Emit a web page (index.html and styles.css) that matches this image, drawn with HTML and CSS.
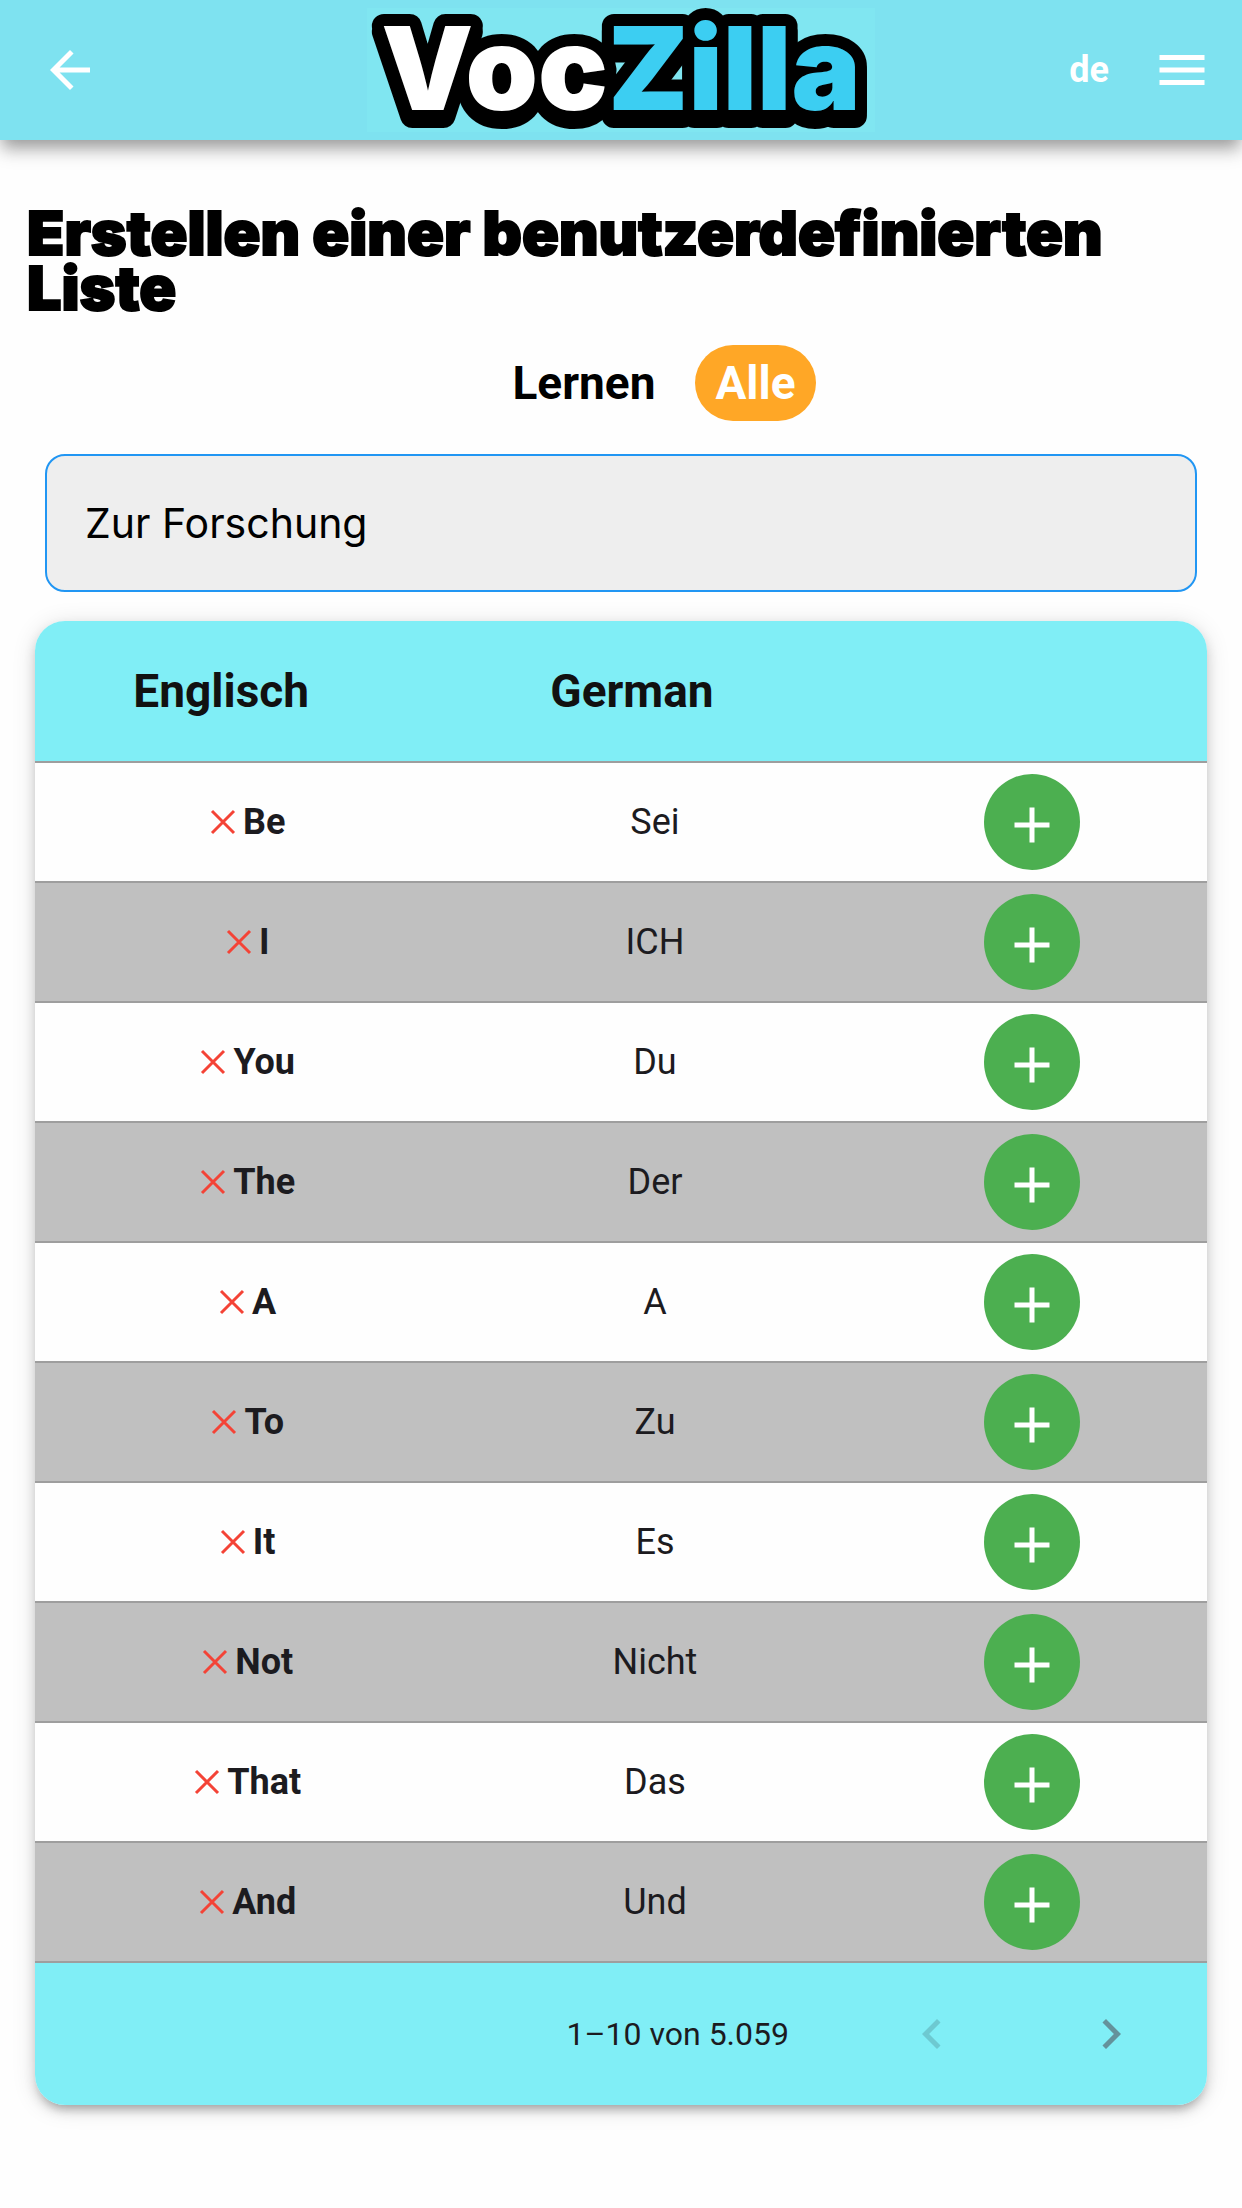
FILE: index.html
```html
<!DOCTYPE html>
<html lang="de">
<head>
<meta charset="utf-8">
<meta name="viewport" content="width=device-width, initial-scale=1">
<title>VocZilla</title>
<link rel="stylesheet" href="styles.css">
</head>
<body>
<svg class="sprite" aria-hidden="true">
  <symbol id="close" viewBox="0 0 24 24"><path d="M5.400 5.400 18.600 18.600M18.600 5.400 5.400 18.600" fill="none" stroke="currentColor" stroke-width="1.800"/></symbol>
  <symbol id="plus" viewBox="0 0 96 96"><path d="M48 33.500v35M30.500 51h35" fill="none" stroke="currentColor" stroke-width="5"/></symbol>
</svg>
<header class="topbar">
  <button class="icon-button back" type="button" aria-label="Zurück">
    <svg class="icon" viewBox="0 0 24 24"><path d="M20 11H7.830l5.590-5.590L12 4l-8 8 8 8 1.410-1.410L7.830 13H20z"/></svg>
  </button>
  <svg class="logo" viewBox="0 0 508 124" role="img" aria-label="VocZilla">
    <defs>
      <linearGradient id="logo-fill" gradientUnits="userSpaceOnUse" x1="0" y1="0" x2="508" y2="0">
        <stop offset="0.472" stop-color="#fff"/>
        <stop offset="0.472" stop-color="#3ccef2"/>
      </linearGradient>
    </defs>
    <text class="logo-text" x="254" y="102" text-anchor="middle" fill="url(#logo-fill)">VocZilla</text>
  </svg>
  <div class="topbar-actions">
    <button class="language" type="button">de</button>
    <button class="icon-button" type="button" aria-label="Menü">
      <svg class="icon" viewBox="0 0 24 24"><path d="M3 18h18v-2H3v2zm0-5h18v-2H3v2zm0-7v2h18V6H3z"/></svg>
    </button>
  </div>
</header>
<main class="page">
  <h1 class="title">Erstellen einer benutzerdefinierten Liste</h1>
  <div class="filters">
    <button class="filter" type="button">Lernen</button>
    <button class="filter filter-active" type="button">Alle</button>
  </div>
  <input class="search" type="search" placeholder="Zur Forschung" aria-label="Zur Forschung">
  <section class="card">
    <table class="words">
      <colgroup><col class="col-source"><col class="col-target"><col></colgroup>
      <thead><tr><th scope="col">Englisch</th><th scope="col">German</th><td></td></tr></thead>
      <tbody>
        <tr><th scope="row"><span class="word"><svg class="mark"><use href="#close"/></svg>Be</span></th><td>Sei</td><td><button class="add" type="button" aria-label="Be hinzufügen"><svg><use href="#plus"/></svg></button></td></tr>
        <tr><th scope="row"><span class="word"><svg class="mark"><use href="#close"/></svg>I</span></th><td>ICH</td><td><button class="add" type="button" aria-label="I hinzufügen"><svg><use href="#plus"/></svg></button></td></tr>
        <tr><th scope="row"><span class="word"><svg class="mark"><use href="#close"/></svg>You</span></th><td>Du</td><td><button class="add" type="button" aria-label="You hinzufügen"><svg><use href="#plus"/></svg></button></td></tr>
        <tr><th scope="row"><span class="word"><svg class="mark"><use href="#close"/></svg>The</span></th><td>Der</td><td><button class="add" type="button" aria-label="The hinzufügen"><svg><use href="#plus"/></svg></button></td></tr>
        <tr><th scope="row"><span class="word"><svg class="mark"><use href="#close"/></svg>A</span></th><td>A</td><td><button class="add" type="button" aria-label="A hinzufügen"><svg><use href="#plus"/></svg></button></td></tr>
        <tr><th scope="row"><span class="word"><svg class="mark"><use href="#close"/></svg>To</span></th><td>Zu</td><td><button class="add" type="button" aria-label="To hinzufügen"><svg><use href="#plus"/></svg></button></td></tr>
        <tr><th scope="row"><span class="word"><svg class="mark"><use href="#close"/></svg>It</span></th><td>Es</td><td><button class="add" type="button" aria-label="It hinzufügen"><svg><use href="#plus"/></svg></button></td></tr>
        <tr><th scope="row"><span class="word"><svg class="mark"><use href="#close"/></svg>Not</span></th><td>Nicht</td><td><button class="add" type="button" aria-label="Not hinzufügen"><svg><use href="#plus"/></svg></button></td></tr>
        <tr><th scope="row"><span class="word"><svg class="mark"><use href="#close"/></svg>That</span></th><td>Das</td><td><button class="add" type="button" aria-label="That hinzufügen"><svg><use href="#plus"/></svg></button></td></tr>
        <tr><th scope="row"><span class="word"><svg class="mark"><use href="#close"/></svg>And</span></th><td>Und</td><td><button class="add" type="button" aria-label="And hinzufügen"><svg><use href="#plus"/></svg></button></td></tr>
      </tbody>
    </table>
    <nav class="pager" aria-label="Seiten">
      <span class="range">1–10 von 5.059</span>
      <button class="icon-button pager-button" type="button" aria-label="Vorherige Seite" disabled>
        <svg class="icon" viewBox="0 0 24 24"><path d="M15.410 7.410 14 6l-6 6 6 6 1.410-1.410L10.830 12z"/></svg>
      </button>
      <button class="icon-button pager-button" type="button" aria-label="Nächste Seite">
        <svg class="icon" viewBox="0 0 24 24"><path d="M10 6 8.590 7.410 13.170 12l-4.580 4.590L10 18l6-6z"/></svg>
      </button>
    </nav>
  </section>
</main>
</body>
</html>
```
FILE: styles.css
```css
* { box-sizing: border-box; }

body {
  margin: 0;
  background: #fefefe;
  color: #1c1b1f;
  font-family: Roboto, "Liberation Sans", sans-serif;
  font-size: 36px;
}

button {
  border: 0;
  padding: 0;
  background: none;
  color: inherit;
  font: inherit;
  cursor: pointer;
}

.sprite {
  display: none;
}

.topbar {
  display: grid;
  grid-template-columns: 1fr auto 1fr;
  align-items: center;
  height: 140px;
  padding: 0 30px;
  background: #7ee2f0;
  color: #fff;
  box-shadow: 0 9px 15px -3px rgba(0, 0, 0, .3), 0 12px 18px rgba(0, 0, 0, .14);
}

.icon-button {
  display: flex;
  justify-content: center;
  align-items: center;
  width: 60px;
  height: 60px;
}

.back { width: 80px; }

.icon {
  width: 60px;
  height: 60px;
  fill: currentColor;
}

.logo {
  width: 508px;
  height: 124px;
  overflow: visible;
  background: #80e6f1;
}

.logo-text {
  filter: drop-shadow(0 6px 0 #000);
  font-family: Inter, "Liberation Sans", sans-serif;
  font-size: 116px;
  font-weight: 900;
  paint-order: stroke;
  stroke: #000;
  stroke-width: 24px;
  stroke-linejoin: round;
}

.topbar-actions {
  display: flex;
  justify-content: flex-end;
  align-items: center;
  gap: 43px;
}

.language { font-weight: 700; }

.title {
  margin: 0;
  padding: 66px 27px 0;
  color: #000;
  font-family: Inter, "Liberation Sans", sans-serif;
  font-size: 61px;
  font-weight: 900;
  line-height: 55px;
  -webkit-text-stroke: 2px #000;
}

.filters {
  display: flex;
  justify-content: center;
  gap: 20px;
  margin-top: 29px;
  padding-left: 66px;
}

.filter {
  height: 76px;
  padding: 0 20px;
  border-radius: 38px;
  color: #000;
  font-size: 46px;
  font-weight: 700;
}

.filter-active {
  background: #ffa726;
  color: #fff;
}

.search {
  display: block;
  width: calc(100% - 90px);
  height: 138px;
  margin: 33px 45px 29px;
  padding: 0 38px;
  border: 2px solid #2196f3;
  border-radius: 20px;
  background: #eee;
  color: #000;
  font-family: Inter, "Liberation Sans", sans-serif;
  font-size: 41px;
  appearance: none;
}

.search::placeholder {
  color: #000;
  opacity: 1;
}

.card {
  margin: 0 35px 60px;
  overflow: hidden;
  border-radius: 30px;
  box-shadow: 0 9px 9px -6px rgba(0, 0, 0, .2), 0 6px 12px rgba(0, 0, 0, .14), 0 3px 24px rgba(0, 0, 0, .12);
}

.words {
  width: 100%;
  border-collapse: separate;
  border-spacing: 0;
  table-layout: fixed;
  text-align: center;
}

.col-source { width: 35.7%; }
.col-target { width: 34.4%; }

.words th,
.words td {
  height: 120px;
  padding: 0;
  border-bottom: 2px solid #9e9e9e;
}

.words thead th,
.words thead td {
  height: 142px;
  padding-right: 46px;
  background: #80eef6;
  color: #111;
  font-size: 46px;
}

.words tbody tr { background: #fefefe; }
.words tbody tr:nth-child(even) { background: #c0c0c0; }

.word {
  display: flex;
  justify-content: center;
  align-items: center;
}

.mark {
  width: 40px;
  height: 40px;
  color: #f44336;
}

.add {
  display: block;
  width: 96px;
  height: 96px;
  margin: 0 auto;
  border-radius: 50%;
  background: #4caf50;
  color: #fff;
}

.add svg {
  display: block;
  width: 96px;
  height: 96px;
}

.pager {
  display: flex;
  justify-content: flex-end;
  align-items: center;
  gap: 119px;
  height: 142px;
  padding-right: 66px;
  background: #80eef6;
}

.range {
  margin-right: -6px;
  font-size: 32px;
}

.pager-button { color: #64929b; }
.pager-button:disabled { color: #6dc9d1; }
```
